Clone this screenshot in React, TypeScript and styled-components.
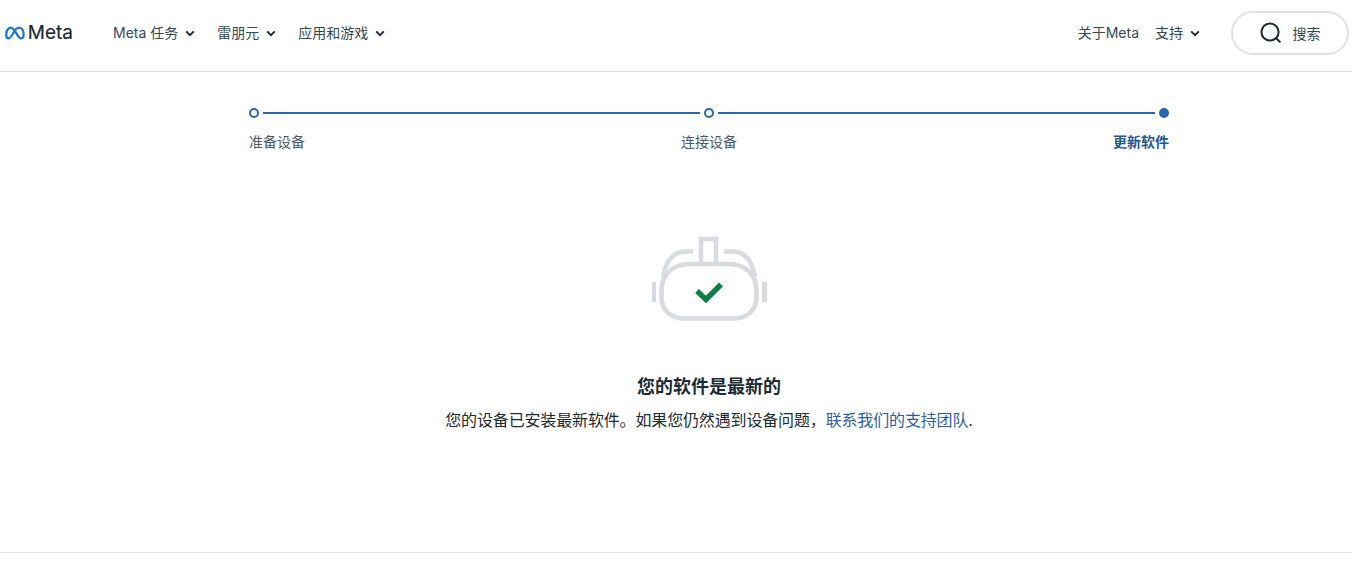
import React from "react";
import styled, { createGlobalStyle } from "styled-components";

const FONT = `"Inter", "Noto Sans CJK SC", sans-serif`;

const Global = createGlobalStyle`
  html, body { margin: 0; padding: 0; background: #fff; }
  body { font-family: ${FONT}; color: #1c2b33; overflow: hidden; }
`;

const Page = styled.div`
  width: 1352px;
  height: 570px;
  display: flex;
  flex-direction: column;
`;

const Header = styled.header`
  border-bottom: 1px solid #dadde1;
  display: flex;
  align-items: center;
  padding: 0 3px 5px 5px;
  height: 66px;
  flex: none;
`;

const LogoLink = styled.a`
  display: flex;
  align-items: center;
  gap: 3px;
  margin-right: 40px;
  width: 68px;
`;

const LogoText = styled.span`
  font-family: "Inter", sans-serif;
  font-size: 19px;
  font-weight: 400;
  color: #1c2b33;
  line-height: 20px;
  -webkit-text-stroke: 0.2px #1c2b33;
`;

const Nav = styled.nav<{ $gap: number }>`
  display: flex;
  align-items: center;
  gap: ${(p) => p.$gap}px;
`;

const NavItem = styled.a`
  display: flex;
  align-items: center;
  gap: 7px;
  font-size: 14px;
  line-height: 20px;
  color: #344854;
  white-space: nowrap;
`;

const Spacer = styled.div`
  flex: 1;
`;

const SearchButton = styled.button`
  width: 118px;
  height: 44px;
  margin-left: 31px;
  border: 2px solid #dfe2e5;
  border-radius: 22px;
  background: #fff;
  display: flex;
  align-items: center;
  justify-content: center;
  gap: 11px;
  padding: 0;
  font-family: ${FONT};
  font-size: 14px;
  color: #344854;
`;

const Main = styled.main`
  flex: none;
  box-sizing: border-box;
  height: 481px;
  padding: 34px 0 0 249px;
  border-bottom: 1px solid #e4e6e9;
`;

const Stepper = styled.div`
  width: 920px;
`;

const Track = styled.div`
  display: flex;
  align-items: center;
  height: 14px;
`;

const Dot = styled.span<{ $filled?: boolean }>`
  flex: none;
  box-sizing: border-box;
  width: 10px;
  height: 10px;
  border-radius: 50%;
  border: 2px solid #2a65ad;
  background: ${(p) => (p.$filled ? "#2a65ad" : "#fff")};
`;

const Line = styled.span`
  flex: 1;
  height: 2px;
  background: #2a65ad;
  margin: 0 4px;
`;

const Labels = styled.div`
  display: grid;
  grid-template-columns: 1fr 1fr 1fr;
  margin-top: 12px;
`;

const StepLabel = styled.span<{ $align: string; $active?: boolean }>`
  text-align: ${(p) => p.$align};
  font-size: 14px;
  line-height: 20px;
  font-weight: ${(p) => (p.$active ? 700 : 400)};
  color: ${(p) => (p.$active ? "#24578f" : "#4a5b66")};
`;

const Result = styled.section`
  width: 920px;
  display: flex;
  flex-direction: column;
  align-items: center;
  margin-top: 83px;
`;

const Title = styled.h2`
  margin: 52px 0 0;
  font-size: 18px;
  line-height: 24px;
  font-weight: 700;
  color: #1c2b33;
`;

const Body = styled.p`
  margin: 10px 0 0;
  font-size: 16px;
  line-height: 22px;
  letter-spacing: -0.15px;
  color: #1c2b33;
`;

const SupportLink = styled.a`
  color: #2d5f9e;
`;

const Chevron = () => (
  <svg width="10" height="7" viewBox="0 0 10 7" aria-hidden="true">
    <path d="M1.2 1.4 5 5.2l3.8-3.8" fill="none" stroke="#1c2b33" strokeWidth="2" />
  </svg>
);

const MetaMark = () => (
  <svg width="21" height="14" viewBox="0 0 21 14" aria-hidden="true">
    <defs>
      <linearGradient id="mm" x1="0" x2="1" y1="0" y2="0">
        <stop offset="0" stopColor="#0a7ce8" />
        <stop offset="1" stopColor="#2c6fd6" />
      </linearGradient>
    </defs>
    <path
      d="M1.300 9C1.300 4.500 3.500 1.300 6 1.300C8.500 1.300 10 3.800 12.500 8C14.500 11.500 15.500 12.700 17 12.700C18.900 12.700 19.800 11 19.800 8.500C19.800 4.500 18 1.300 15 1.300C12.500 1.300 10.500 4 8.500 7.500C6.500 11 5.500 12.700 3.900 12.700C2.200 12.700 1.300 11.200 1.300 9Z"
      fill="none"
      stroke="url(#mm)"
      strokeWidth="2.400"
    />
  </svg>
);

const SearchIcon = () => (
  <svg width="22" height="22" viewBox="0 0 22 22" aria-hidden="true">
    <circle cx="10" cy="10" r="8.600" fill="none" stroke="#1c2b33" strokeWidth="2" />
    <path d="M16 16l4.400 4.400" stroke="#1c2b33" strokeWidth="2" />
  </svg>
);

const HeadsetIcon = () => (
  <svg width="118" height="88" viewBox="0 0 118 88" aria-hidden="true">
    <g fill="none" stroke="#d8dbdf" strokeWidth="4.600">
      <path d="M11.500 56C11.500 38 24 29 40 29H78C94 29 106.500 38 106.500 56V62C106.500 75 97 83.500 84 83.500H34C21 83.500 11.500 75 11.500 62Z" />
      <path d="M43 16.500H36C24 16.500 16 24 13 42" />
      <path d="M74 16.500H82C94 16.500 102 24 105 42" />
      <path d="M51 29V4H66V29" />
    </g>
    <rect x="2" y="47" width="4" height="20" rx="1" fill="#d8dbdf" />
    <rect x="112" y="47" width="5" height="20" rx="1" fill="#d8dbdf" />
    <path d="M47 56l9 8.500 15-15" fill="none" stroke="#0f7f47" strokeWidth="5.500" />
  </svg>
);

export default function App() {
  return (
    <Page>
      <Global />
      <Header>
        <LogoLink>
          <MetaMark />
          <LogoText>Meta</LogoText>
        </LogoLink>
        <Nav $gap={22}>
          <NavItem>Meta 任务 <Chevron /></NavItem>
          <NavItem>雷朋元 <Chevron /></NavItem>
          <NavItem>应用和游戏 <Chevron /></NavItem>
        </Nav>
        <Spacer />
        <Nav $gap={16}>
          <NavItem>关于Meta</NavItem>
          <NavItem>支持 <Chevron /></NavItem>
        </Nav>
        <SearchButton>
          <SearchIcon />
          搜索
        </SearchButton>
      </Header>
      <Main>
        <Stepper>
          <Track>
            <Dot />
            <Line />
            <Dot />
            <Line />
            <Dot $filled />
          </Track>
          <Labels>
            <StepLabel $align="left">准备设备</StepLabel>
            <StepLabel $align="center">连接设备</StepLabel>
            <StepLabel $align="right" $active>更新软件</StepLabel>
          </Labels>
        </Stepper>
        <Result>
          <HeadsetIcon />
          <Title>您的软件是最新的</Title>
          <Body>
            您的设备已安装最新软件。如果您仍然遇到设备问题，<SupportLink>联系我们的支持团队</SupportLink>.
          </Body>
        </Result>
      </Main>
    </Page>
  );
}
